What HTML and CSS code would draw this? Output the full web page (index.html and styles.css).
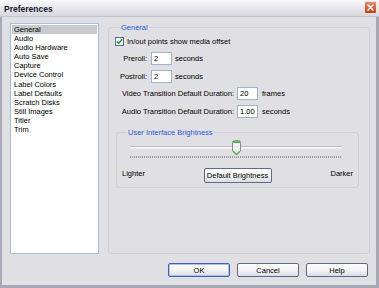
FILE: index.html
```html
<!DOCTYPE html>
<html lang="en">
    <head>
        <meta charset="utf-8" />
        <title>Preferences</title>
        <link rel="stylesheet" href="styles.css">
    </head>
    <body>
        <div class="window">
            <div class="titlebar">
                <span class="title">Preferences</span>
                <div class="close">
                    <svg width="11" height="11" viewBox="0 0 11 11">
                        <path d="M3 3 L8 8 M8 3 L3 8" stroke="#fff" stroke-width="1.6" stroke-linecap="round" />
                    </svg>
                </div>
            </div>
            <div class="frame">
                <div class="main">
                    <ul class="cats">
                        <li class="sel">General</li>
                        <li>Audio</li>
                        <li>Audio Hardware</li>
                        <li>Auto Save</li>
                        <li>Capture</li>
                        <li>Device Control</li>
                        <li>Label Colors</li>
                        <li>Label Defaults</li>
                        <li>Scratch Disks</li>
                        <li>Still Images</li>
                        <li>Titler</li>
                        <li>Trim</li>
                    </ul>

                    <fieldset class="group general">
                        <legend>General</legend>
                        <div class="check">
                            <span class="box">
                                <svg width="7" height="7" viewBox="0 0 7 7">
                                    <path d="M0.8 3.4 L2.7 5.4 L6.2 1.2" fill="none" stroke="#21a121" stroke-width="1.5" />
                                </svg>
                            </span>
                            <span>In/out points show media offset</span>
                        </div>
                        <div class="row">
                            <span class="lbl short">Preroll:</span>
                            <span class="field">2</span>
                            <span class="unit">seconds</span>
                        </div>
                        <div class="row">
                            <span class="lbl short">Postroll:</span>
                            <span class="field">2</span>
                            <span class="unit">seconds</span>
                        </div>
                        <div class="row">
                            <span class="lbl long">Video Transition Default Duration:</span>
                            <span class="field">20</span>
                            <span class="unit wide">frames</span>
                        </div>
                        <div class="row">
                            <span class="lbl long">Audio Transition Default Duration:</span>
                            <span class="field">1.00</span>
                            <span class="unit wide">seconds</span>
                        </div>

                        <fieldset class="group bright">
                            <legend>User Interface Brightness</legend>
                            <div class="slider">
                                <div class="track"></div>
                                <div class="ticks"></div>
                                <svg class="thumb" width="9" height="16" viewBox="0 0 9 16">
                                    <path d="M0.5 2.5 Q0.5 0.5 2.5 0.5 H6.5 Q8.5 0.5 8.5 2.5 V11 L4.5 15 L0.5 11 Z" fill="#f2f2f4" stroke="#8c8c96" />
                                    <path d="M1 1.2 H8 V3 H1 Z" fill="#3cbc3c" />
                                    <path d="M1.2 11.3 L4.5 14.4 L7.8 11.3" fill="none" stroke="#3cbc3c" stroke-width="1.2" />
                                </svg>
                            </div>
                            <div class="ends">
                                <span>Lighter</span>
                                <button class="btn def">Default Brightness</button>
                                <span class="right">Darker</span>
                            </div>
                        </fieldset>
                    </fieldset>
                </div>

                <div class="actions">
                    <button class="btn focus">OK</button>
                    <button class="btn">Cancel</button>
                    <button class="btn">Help</button>
                </div>
            </div>
        </div>
    </body>
</html>
```

FILE: styles.css
```css
* {
    margin: 0;
    padding: 0;
    box-sizing: border-box;
}

body {
    font-family: "Liberation Sans", Arial, sans-serif;
    font-size: 7.5px;
    color: #000;
    background: #e0dfe3;
}

.window {
    width: 379px;
    height: 288px;
    background: #e0dfe3;
}

.titlebar {
    display: flex;
    justify-content: space-between;
    align-items: flex-start;
    height: 17px;
    padding: 1px 2px 0 4px;
    background: linear-gradient(#fbfbfc, #e9e9ee 45%, #d7d7df);
    border-bottom: 1px solid #c4c4ce;
}

.title {
    margin-top: 3px;
    font-weight: 700;
    font-size: 8.5px;
    line-height: 10px;
    color: #1a1a28;
}

.close {
    display: flex;
    flex: none;
    width: 13px;
    height: 13px;
    border: 1px solid #f4e4e0;
    border-radius: 2px;
    background-color: #d0502e;
    background-image: linear-gradient(#e98a6a, #c83c1c);
    align-items: center;
    justify-content: center;
}

.frame {
    height: 271px;
    padding: 6px 6px 0 8px;
    border-left: 2px solid #a7a7b6;
    border-right: 3px solid #a7a7b6;
    border-bottom: 3px solid #a7a7b6;
}

.main {
    display: flex;
    height: 231px;
}

.cats {
    list-style: none;
    width: 90px;
    padding: 1px;
    background: #fff;
    border: 1px solid #a9bdd6;
}

.cats li {
    height: 9.1px;
    line-height: 9.1px;
    padding-left: 2px;
    white-space: nowrap;
}

.cats li.sel {
    background: #c9c9ce;
}

.group {
    border: 1px solid #cfcfd6;
    border-radius: 3px;
}

.group legend {
    line-height: 9px;
    padding: 0 1px;
    color: #2b5ad4;
}

.general {
    width: 261px;
    margin-left: 9px;
    padding: 4px 10px 0 6px;
}

.general > legend {
    margin-left: 5px;
}

.check {
    display: flex;
    align-items: center;
    height: 10px;
}

.box {
    display: flex;
    align-items: center;
    justify-content: center;
    width: 9px;
    height: 9px;
    margin-right: 3px;
    background: #fff;
    border: 1px solid #50709c;
}

.row {
    display: flex;
    align-items: center;
    height: 13px;
    margin-top: 4.6px;
    white-space: nowrap;
}

.check + .row {
    margin-top: 6px;
}

.lbl {
    text-align: right;
}

.lbl.short {
    width: 32px;
    margin-right: 4px;
}

.lbl.long {
    width: 119px;
    margin-right: 3px;
}

.field {
    width: 21px;
    height: 13px;
    line-height: 11px;
    padding-left: 2px;
    background: #fff;
    border: 1px solid #a5b3c6;
}

.unit {
    margin-left: 3px;
}

.unit.wide {
    margin-left: 4px;
}

.bright {
    width: 243px;
    height: 60px;
    margin: 10.5px 0 0 1px;
    padding: 0 5px;
}

.bright > legend {
    margin-left: 5px;
}

.slider {
    position: relative;
    height: 19px;
    margin: 2.5px 11px 0 8px;
    padding-top: 6px;
}

.track {
    height: 3px;
    background: #fdfdfd;
    border-top: 1px solid #b9b9c0;
    border-bottom: 1px solid #ececf0;
}

.ticks {
    height: 2px;
    margin-top: 7px;
    background: repeating-linear-gradient(90deg, #9a9aa2 0 1px, transparent 1px 2px);
}

.thumb {
    position: absolute;
    top: 0;
    left: 102px;
}

.ends {
    display: grid;
    grid-template-columns: 1fr auto 1fr;
    align-items: start;
    margin-top: 9px;
    line-height: 9px;
}

.ends span {
    margin-top: 1px;
}

.ends .right {
    text-align: right;
}

.btn {
    font-family: "Liberation Sans", Arial, sans-serif;
    font-size: 7.5px;
    color: #000;
    height: 14px;
    border: 1px solid #5f6b86;
    border-radius: 2px;
    background: linear-gradient(#ffffff, #f1f1f4 60%, #dadae2);
}

.btn.def {
    width: 68px;
    height: 15px;
}

.btn.focus {
    border-color: #3d64b4;
    box-shadow: inset 0 0 0 1px #a9c1ec;
}

.actions {
    display: flex;
    justify-content: flex-end;
    gap: 7px;
    margin: 9px 2px 0 0;
}

.actions .btn {
    width: 62px;
}
```
